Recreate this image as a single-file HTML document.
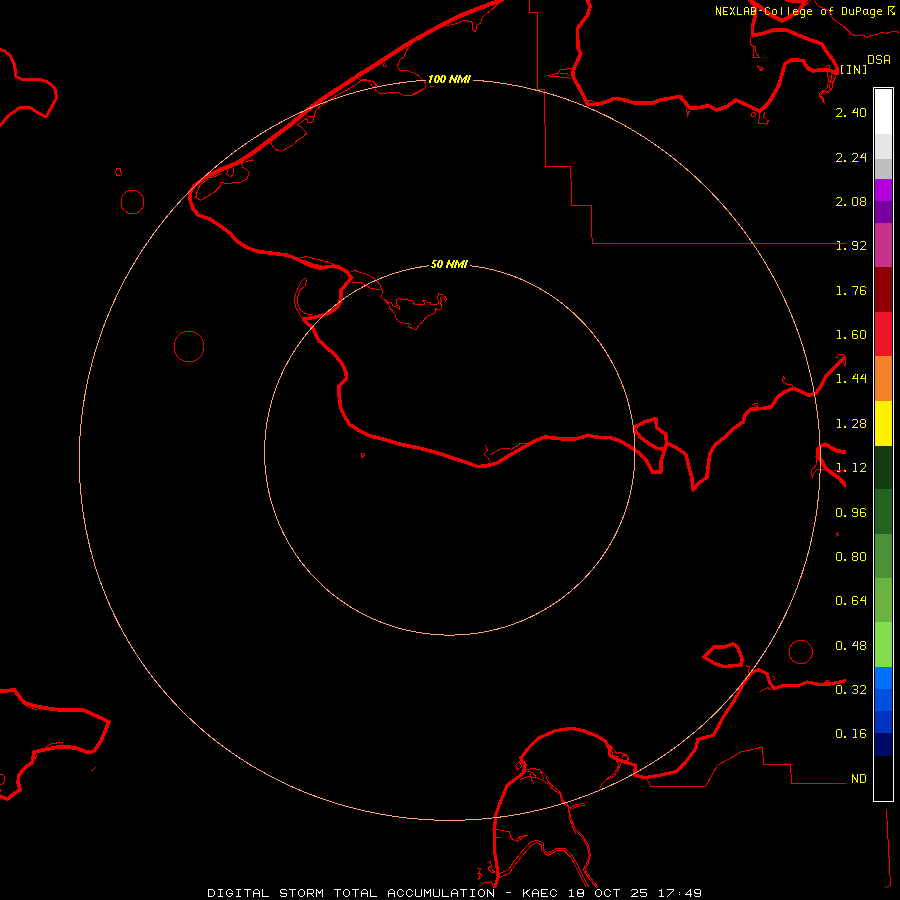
<!DOCTYPE html><html><head><meta charset="utf-8"><title>DSA KAEC</title>
<style>html,body{margin:0;padding:0;background:#000;}body{width:900px;height:900px;overflow:hidden;font-family:"Liberation Sans",sans-serif;}svg{display:block}</style></head><body>
<svg width="900" height="900" viewBox="0 0 900 900" shape-rendering="crispEdges">
<rect width="900" height="900" fill="#000"/>
<clipPath id="mc"><rect x="0" y="0" width="846" height="900"/></clipPath>
<g fill="none" stroke="#f00000" stroke-width="3" stroke-linejoin="round" stroke-linecap="round" clip-path="url(#mc)">
<path stroke-width="3" d="M0.0,49.5 L4.5,51.0 L10.5,56.0 L14.5,64.5 L16.0,76.5 L23.0,80.0 L32.0,79.5 L40.0,79.5 L46.5,81.5 L53.0,86.0 L55.5,90.5 L56.5,98.0 L52.0,106.5 L46.5,116.0 L44.0,116.0 L36.5,112.0 L30.0,107.5 L20.0,107.5 L14.5,111.5 L8.0,116.0 L0.0,126.0"/>
<path stroke-width="3.6" d="M501.7,0.0 L490.0,4.2 L476.7,9.2 L460.0,15.8 L443.3,24.2 L426.7,33.3 L410.0,42.5 L393.3,53.3 L376.7,64.2 L360.0,74.2 L356.7,76.7 L340.0,87.5 L323.3,98.3 L306.7,110.8 L290.0,125.0 L283.3,130.0 L270.0,140.0 L253.3,152.5 L236.7,163.3 L220.0,170.0 L206.7,176.7 L195.0,185.0 L190.0,192.5 L190.0,200.0 L193.3,209.2 L198.3,215.0 L210.0,219.2 L220.0,225.8 L230.0,233.3 L236.7,240.8 L246.7,247.5 L258.3,251.7 L273.3,253.3 L286.7,255.0 L300.0,260.3 L310.7,265.7 L320.0,268.3 L329.3,266.3 L338.7,267.0 L346.7,271.7 L351.3,277.7 L346.7,283.7 L340.7,290.3 L340.7,297.7 L340.0,303.0 L334.7,309.7 L328.0,313.7 L318.7,316.3 L312.0,317.7 L303.3,319.0 L306.0,322.3 L312.0,327.0 L315.3,333.7 L318.3,340.0 L326.7,347.5 L335.0,355.0 L341.7,363.3 L345.8,371.7 L346.7,378.3 L339.2,385.8 L339.2,396.7 L340.8,408.3 L345.0,416.7 L349.2,424.2 L358.3,430.0 L370.0,435.8 L383.3,439.2 L400.0,444.2 L416.7,447.5 L433.3,451.7 L440.0,453.7 L453.3,458.3 L466.7,462.5 L477.5,466.7 L486.7,465.8 L496.7,463.3 L510.0,455.0 L523.3,447.5 L535.0,440.8 L545.0,437.0 L556.7,438.3 L566.7,439.2 L576.7,438.7 L588.3,435.3 L598.3,437.5 L610.0,437.5 L620.0,440.8 L630.0,446.7 L638.3,452.5 L645.8,460.0 L650.0,466.7 L652.5,472.0 L660.8,472.0 L660.8,461.7 L663.3,454.2 L665.0,449.2 L656.7,448.3 L648.3,443.3 L640.8,437.5 L635.8,431.7 L634.2,427.5 L645.0,421.7 L655.8,418.7 L656.7,427.5 L665.8,434.2 L666.7,443.3 L675.0,446.7 L685.8,454.2 L688.3,465.0 L691.7,476.7 L693.3,490.0 L698.3,483.3 L706.7,477.5 L708.3,465.0 L710.0,453.3 L715.0,445.0 L723.3,438.3 L731.7,430.0 L743.3,421.7 L745.0,415.0 L750.8,409.2 L763.3,408.3 L771.7,406.7 L776.7,398.3 L783.3,392.5 L793.3,388.3 L801.7,391.7 L808.3,395.3 L815.8,393.3 L821.7,385.0 L826.7,375.0 L835.0,366.7 L844.2,358.3"/>
<path stroke-width="3.6" d="M665.0,449.2 L666.7,443.3"/>
<path stroke-width="4" d="M848.0,452.6 L838.0,451.1 L830.9,447.6 L825.6,444.4 L821.1,445.8 L817.6,450.2 L818.4,456.4 L822.0,461.8 L825.6,468.0 L831.8,473.3 L838.9,477.8 L848.0,488.5"/>
<path stroke-width="3.7" d="M587.5,0.0 L590.0,6.7 L587.5,15.0 L582.5,21.7 L577.5,28.3 L577.5,38.3 L578.3,48.3 L580.8,53.3 L577.5,60.8 L574.2,67.5 L572.5,74.2 L575.0,80.0 L580.0,89.2 L585.0,99.2 L588.3,104.7 L598.3,104.2 L606.7,101.7 L615.0,98.3 L625.0,100.0 L635.0,103.3 L651.7,103.3 L660.0,100.0 L670.0,98.3 L680.0,96.3 L690.0,108.3 L700.0,107.5 L708.3,105.8 L716.7,110.0 L726.7,106.7 L735.8,100.0 L746.7,105.0 L760.0,111.3 L768.3,103.3 L778.3,86.7 L781.4,76.5 L785.1,63.5 L791.6,59.9 L803.1,60.6 L807.4,67.9 L813.2,70.8 L820.4,70.0 L829.1,70.0 L837.0,73.6 L837.0,67.9 L833.4,60.6 L827.7,53.4 L821.9,44.0 L811.8,40.4 L798.8,35.4 L787.2,30.3 L773.3,30.0 L763.3,33.3 L752.5,35.8 L752.5,26.7 L755.0,16.7 L755.0,6.7 L750.0,0.0"/>
<path stroke-width="4" d="M750.0,0.0 L760.0,6.7 L771.7,15.8 L781.7,20.8 L788.7,17.3 L798.8,11.6 L803.1,4.3 L804.5,0.0"/>
<path stroke-width="4" d="M787.2,0.0 L798.8,1.4 L806.0,0.0"/>
<path stroke-width="3.7" d="M0.0,690.8 L7.2,690.8 L14.4,689.8 L18.8,695.9 L23.8,702.4 L34.7,706.0 L46.2,708.2 L62.1,710.3 L83.8,710.3 L98.2,716.8 L109.0,721.9 L105.4,730.5 L101.1,740.6 L93.9,751.5 L86.6,752.2 L78.0,748.6 L69.3,747.1 L57.8,747.1 L46.2,749.3 L33.9,752.2 L32.5,762.3 L24.5,768.1 L18.8,775.3 L18.1,782.5 L20.2,789.7 L13.7,794.1 L7.2,799.1 L0.0,796.2"/>
<path stroke-width="3.3" d="M493.5,890.0 L495.0,886.7 L498.3,876.7 L496.7,865.0 L494.2,848.3 L494.2,831.7 L495.8,815.0 L497.5,810.0 L501.7,798.3 L507.5,785.0 L516.7,778.3 L523.3,773.3 L525.0,765.0 L520.8,758.3 L528.3,748.3 L538.3,738.3 L555.0,730.8 L571.7,728.3 L583.3,730.8 L596.7,735.8 L605.0,740.8 L609.2,749.2 L610.0,755.8 L616.7,759.2 L626.7,762.6 L635.5,765.3 L634.7,775.1 L644.4,777.7 L660.4,775.1 L676.4,771.5 L685.3,762.6 L696.0,748.4 L697.7,739.5 L713.7,735.1 L722.6,718.2 L733.3,702.2 L737.6,694.2 L745.1,681.0 L750.8,673.5 L758.3,669.7 L766.8,673.5 L769.7,682.9 L774.4,688.6 L782.9,685.7 L798.0,685.7 L807.5,682.0 L818.8,684.4 L832.0,683.8 L848.0,680.0"/>
<path stroke-width="3.5" d="M704.0,656.9 L713.7,647.1 L724.4,646.8 L733.3,643.9 L737.7,647.1 L742.2,659.5 L741.3,664.9 L724.4,666.7 L713.7,663.1 Z"/>
<path stroke-width="4.3" d="M501.7,0.0 L490.0,4.2 L476.7,9.2 L460.0,15.8 L443.3,24.2 L426.7,33.3 L410.0,42.5 L393.3,53.3 L376.7,64.2 L360.0,74.2 L356.7,76.7 L340.0,87.5 L323.3,98.3 L306.7,110.8 L290.0,125.0 L283.3,130.0 L270.0,140.0 L253.3,152.5 L236.7,163.3 L220.0,170.0 L206.7,176.7"/>
</g>
<rect x="873.5" y="87.5" width="20" height="714" fill="#000" stroke="#fff" stroke-width="1"/>
<rect x="875" y="89" width="17" height="45" fill="#ffffff"/>
<rect x="875" y="134" width="17" height="25" fill="#e6e6e6"/>
<rect x="875" y="159" width="17" height="20" fill="#bebebe"/>
<rect x="875" y="179" width="17" height="22" fill="#b000dc"/>
<rect x="875" y="201" width="17" height="22" fill="#7800a0"/>
<rect x="875" y="223" width="17" height="44" fill="#c8328c"/>
<rect x="875" y="267" width="17" height="45" fill="#8c0000"/>
<rect x="875" y="312" width="17" height="44" fill="#f01428"/>
<rect x="875" y="356" width="17" height="45" fill="#f08228"/>
<rect x="875" y="401" width="17" height="45" fill="#fff000"/>
<rect x="875" y="446" width="17" height="43" fill="#143c14"/>
<rect x="875" y="489" width="17" height="45" fill="#236423"/>
<rect x="875" y="534" width="17" height="44" fill="#4b9137"/>
<rect x="875" y="578" width="17" height="44" fill="#69b441"/>
<rect x="875" y="622" width="17" height="45" fill="#82dc50"/>
<rect x="875" y="667" width="17" height="22" fill="#0070ff"/>
<rect x="875" y="689" width="17" height="22" fill="#0050e0"/>
<rect x="875" y="711" width="17" height="22" fill="#0032c0"/>
<rect x="875" y="733" width="17" height="23" fill="#000a64"/>
<path fill="none" stroke="#ffff00" stroke-width="1" stroke-linecap="square" d="M836.50,109.50L837.50,108.50L840.50,108.50L841.50,109.50L841.50,111.24L837.00,115.81L836.50,116.50L841.50,116.50M844.5,115.5h1v1h-1zM857.50,116.50L857.50,108.50M855.50,108.50L852.50,112.50L857.50,112.50M861.50,108.50L864.50,108.50L865.50,109.50L865.50,115.50L864.50,116.50L861.50,116.50L860.50,115.50L860.50,109.50ZM836.50,154.50L837.50,153.50L840.50,153.50L841.50,154.50L841.50,156.24L837.00,160.81L836.50,161.50L841.50,161.50M844.5,160.5h1v1h-1zM852.50,154.50L853.50,153.50L856.50,153.50L857.50,154.50L857.50,156.24L853.00,160.81L852.50,161.50L857.50,161.50M865.50,161.50L865.50,153.50M863.50,153.50L860.50,157.50L865.50,157.50M836.50,198.50L837.50,197.50L840.50,197.50L841.50,198.50L841.50,200.24L837.00,204.81L836.50,205.50L841.50,205.50M844.5,204.5h1v1h-1zM853.50,197.50L856.50,197.50L857.50,198.50L857.50,204.50L856.50,205.50L853.50,205.50L852.50,204.50L852.50,198.50ZM861.50,197.50L864.50,197.50L865.50,198.50L865.50,200.50L864.50,201.50L861.50,201.50L860.50,200.50L860.50,198.50ZM861.50,201.50L860.50,202.50L860.50,204.50L861.50,205.50L864.50,205.50L865.50,204.50L865.50,202.50L864.50,201.50M837.50,241.50L839.50,241.50L839.50,249.50M837.50,249.50L840.50,249.50M844.5,248.5h1v1h-1zM852.50,248.50L853.50,249.50L856.50,249.50L857.50,248.50L857.50,242.50L856.50,241.50L853.50,241.50L852.50,242.50L852.50,244.50L853.50,245.50L857.50,245.50M860.50,242.50L861.50,241.50L864.50,241.50L865.50,242.50L865.50,244.24L861.00,248.81L860.50,249.50L865.50,249.50M837.50,286.50L839.50,286.50L839.50,294.50M837.50,294.50L840.50,294.50M844.5,293.5h1v1h-1zM852.50,286.50L857.50,286.50L857.50,287.64L855.50,291.64L855.50,294.50M865.50,287.50L864.50,286.50L861.50,286.50L860.50,287.50L860.50,293.50L861.50,294.50L864.50,294.50L865.50,293.50L865.50,291.50L864.50,290.50L860.50,290.50M837.50,330.50L839.50,330.50L839.50,338.50M837.50,338.50L840.50,338.50M844.5,337.5h1v1h-1zM857.50,331.50L856.50,330.50L853.50,330.50L852.50,331.50L852.50,337.50L853.50,338.50L856.50,338.50L857.50,337.50L857.50,335.50L856.50,334.50L852.50,334.50M861.50,330.50L864.50,330.50L865.50,331.50L865.50,337.50L864.50,338.50L861.50,338.50L860.50,337.50L860.50,331.50ZM837.50,374.50L839.50,374.50L839.50,382.50M837.50,382.50L840.50,382.50M844.5,381.5h1v1h-1zM857.50,382.50L857.50,374.50M855.50,374.50L852.50,378.50L857.50,378.50M865.50,382.50L865.50,374.50M863.50,374.50L860.50,378.50L865.50,378.50M837.50,419.50L839.50,419.50L839.50,427.50M837.50,427.50L840.50,427.50M844.5,426.5h1v1h-1zM852.50,420.50L853.50,419.50L856.50,419.50L857.50,420.50L857.50,422.24L853.00,426.81L852.50,427.50L857.50,427.50M861.50,419.50L864.50,419.50L865.50,420.50L865.50,422.50L864.50,423.50L861.50,423.50L860.50,422.50L860.50,420.50ZM861.50,423.50L860.50,424.50L860.50,426.50L861.50,427.50L864.50,427.50L865.50,426.50L865.50,424.50L864.50,423.50M837.50,463.50L839.50,463.50L839.50,471.50M837.50,471.50L840.50,471.50M844.5,470.5h1v1h-1zM853.50,463.50L855.50,463.50L855.50,471.50M853.50,471.50L856.50,471.50M860.50,464.50L861.50,463.50L864.50,463.50L865.50,464.50L865.50,466.24L861.00,470.81L860.50,471.50L865.50,471.50M837.50,508.50L840.50,508.50L841.50,509.50L841.50,515.50L840.50,516.50L837.50,516.50L836.50,515.50L836.50,509.50ZM844.5,515.5h1v1h-1zM852.50,515.50L853.50,516.50L856.50,516.50L857.50,515.50L857.50,509.50L856.50,508.50L853.50,508.50L852.50,509.50L852.50,511.50L853.50,512.50L857.50,512.50M865.50,509.50L864.50,508.50L861.50,508.50L860.50,509.50L860.50,515.50L861.50,516.50L864.50,516.50L865.50,515.50L865.50,513.50L864.50,512.50L860.50,512.50M837.50,552.50L840.50,552.50L841.50,553.50L841.50,559.50L840.50,560.50L837.50,560.50L836.50,559.50L836.50,553.50ZM844.5,559.5h1v1h-1zM853.50,552.50L856.50,552.50L857.50,553.50L857.50,555.50L856.50,556.50L853.50,556.50L852.50,555.50L852.50,553.50ZM853.50,556.50L852.50,557.50L852.50,559.50L853.50,560.50L856.50,560.50L857.50,559.50L857.50,557.50L856.50,556.50M861.50,552.50L864.50,552.50L865.50,553.50L865.50,559.50L864.50,560.50L861.50,560.50L860.50,559.50L860.50,553.50ZM837.50,596.50L840.50,596.50L841.50,597.50L841.50,603.50L840.50,604.50L837.50,604.50L836.50,603.50L836.50,597.50ZM844.5,603.5h1v1h-1zM857.50,597.50L856.50,596.50L853.50,596.50L852.50,597.50L852.50,603.50L853.50,604.50L856.50,604.50L857.50,603.50L857.50,601.50L856.50,600.50L852.50,600.50M865.50,604.50L865.50,596.50M863.50,596.50L860.50,600.50L865.50,600.50M837.50,641.50L840.50,641.50L841.50,642.50L841.50,648.50L840.50,649.50L837.50,649.50L836.50,648.50L836.50,642.50ZM844.5,648.5h1v1h-1zM857.50,649.50L857.50,641.50M855.50,641.50L852.50,645.50L857.50,645.50M861.50,641.50L864.50,641.50L865.50,642.50L865.50,644.50L864.50,645.50L861.50,645.50L860.50,644.50L860.50,642.50ZM861.50,645.50L860.50,646.50L860.50,648.50L861.50,649.50L864.50,649.50L865.50,648.50L865.50,646.50L864.50,645.50M837.50,685.50L840.50,685.50L841.50,686.50L841.50,692.50L840.50,693.50L837.50,693.50L836.50,692.50L836.50,686.50ZM844.5,692.5h1v1h-1zM852.50,686.50L853.50,685.50L856.50,685.50L857.50,686.50L857.50,688.50L856.50,689.50L854.17,689.50M856.50,689.50L857.50,690.50L857.50,692.50L856.50,693.50L853.50,693.50L852.50,692.50M860.50,686.50L861.50,685.50L864.50,685.50L865.50,686.50L865.50,688.24L861.00,692.81L860.50,693.50L865.50,693.50M837.50,729.50L840.50,729.50L841.50,730.50L841.50,736.50L840.50,737.50L837.50,737.50L836.50,736.50L836.50,730.50ZM844.5,736.5h1v1h-1zM853.50,729.50L855.50,729.50L855.50,737.50M853.50,737.50L856.50,737.50M865.50,730.50L864.50,729.50L861.50,729.50L860.50,730.50L860.50,736.50L861.50,737.50L864.50,737.50L865.50,736.50L865.50,734.50L864.50,733.50L860.50,733.50M852.50,782.50L852.50,774.50L857.50,782.50L857.50,774.50M860.50,774.50L860.50,782.50M860.50,774.50L864.50,774.50L865.50,775.50L865.50,781.50L864.50,782.50L860.50,782.50M868.50,55.50L868.50,63.50M868.50,55.50L872.50,55.50L873.50,56.50L873.50,62.50L872.50,63.50L868.50,63.50M881.50,56.50L880.50,55.50L877.50,55.50L876.50,56.50L876.50,58.50L877.50,59.50L880.50,59.50L881.50,60.50L881.50,62.50L880.50,63.50L877.50,63.50L876.50,62.50M884.50,63.50L884.50,56.50L885.50,55.50L888.50,55.50L889.50,56.50L889.50,63.50M884.50,60.07L889.50,60.07M842.67,65.50L841.00,65.50L841.00,73.50L842.67,73.50M847.33,65.50L850.67,65.50M849.00,65.50L849.00,73.50M847.33,73.50L850.67,73.50M854.50,73.50L854.50,65.50L859.50,73.50L859.50,65.50M863.33,65.50L865.00,65.50L865.00,73.50L863.33,73.50M716.50,14.50L716.50,7.50L720.50,14.50L720.50,7.50M727.50,7.50L723.50,7.50L723.50,14.50L727.50,14.50M723.50,11.00L726.17,11.00M730.50,7.50L734.50,14.50M734.50,7.50L730.50,14.50M737.50,7.50L737.50,14.50L741.50,14.50M744.50,14.50L744.50,8.50L745.50,7.50L747.50,7.50L748.50,8.50L748.50,14.50M744.50,11.50L748.50,11.50M751.50,7.50L751.50,14.50M751.50,7.50L754.50,7.50L755.50,8.50L755.50,10.00L754.50,11.00L751.50,11.00M754.50,11.00L755.50,12.00L755.50,13.50L754.50,14.50L751.50,14.50M759.17,10.50L761.83,10.50M769.50,8.50L768.50,7.50L766.50,7.50L765.50,8.50L765.50,13.50L766.50,14.50L768.50,14.50L769.50,13.50M773.50,9.50L775.50,9.50L776.50,10.50L776.50,13.50L775.50,14.50L773.50,14.50L772.50,13.50L772.50,10.50ZM781.50,7.50L781.50,14.50M788.50,7.50L788.50,14.50M793.50,11.50L797.50,11.50L797.50,10.50L796.50,9.50L794.50,9.50L793.50,10.50L793.50,13.50L794.50,14.50L797.50,14.50M804.50,9.50L804.50,16.50L803.50,17.50L801.50,17.50M804.50,10.50L803.50,9.50L801.50,9.50L800.50,10.50L800.50,13.50L801.50,14.50L803.50,14.50L804.50,13.50M807.50,11.50L811.50,11.50L811.50,10.50L810.50,9.50L808.50,9.50L807.50,10.50L807.50,13.50L808.50,14.50L811.50,14.50M822.50,9.50L824.50,9.50L825.50,10.50L825.50,13.50L824.50,14.50L822.50,14.50L821.50,13.50L821.50,10.50ZM832.50,7.50L831.50,7.50L830.50,8.50L830.50,14.50M829.50,10.50L832.50,10.50M842.50,7.50L842.50,14.50M842.50,7.50L845.50,7.50L846.50,8.50L846.50,13.50L845.50,14.50L842.50,14.50M849.50,9.50L849.50,13.50L850.50,14.50L852.50,14.50L853.50,13.50M853.50,9.50L853.50,14.50M856.50,14.50L856.50,7.50L859.50,7.50L860.50,8.50L860.50,10.50L859.50,11.50L856.50,11.50M867.50,10.50L866.50,9.50L864.50,9.50L863.50,10.50L863.50,13.50L864.50,14.50L865.50,14.50L867.50,12.50M867.50,9.50L867.50,13.50L868.17,14.50M874.50,9.50L874.50,16.50L873.50,17.50L871.50,17.50M874.50,10.50L873.50,9.50L871.50,9.50L870.50,10.50L870.50,13.50L871.50,14.50L873.50,14.50L874.50,13.50M877.50,11.50L881.50,11.50L881.50,10.50L880.50,9.50L878.50,9.50L877.50,10.50L877.50,13.50L878.50,14.50L881.50,14.50"/>
<path fill="none" stroke="#ffff00" stroke-width="1" stroke-linecap="square" d="M888.5,14.5 L888.5,6.5 L894.5,6.5 L890.5,10.5 L894.5,14.5"/>
<path fill="#ffff00" d="M894,12h1v1h-1zM893,13h2v1h-2zM892,14h3v1h-3z"/>
<g fill="none" stroke="#f00000" stroke-width="1" stroke-linejoin="round">
<path d="M529.5,0 V12.5 H537.5 V89.5 H544.5 V125 H545.5 V166.5 H570.5 V179 H571.5 V205.5 H591.5 V238 H592.5 V243.5 H846"/>
<path d="M647.1,779.5 L650.6,786.5 L705.7,786.5 L717.3,765.3 L730.0,758.5 L741.3,751.9 L762.5,747.1 L763.5,764.5 L790.5,764.5 L791.5,783.5 L846.0,783.5"/>
<path d="M886.5,810.2 L890.5,885.4 L885.5,887.5"/>
<path d="M814.7,0.0 L817.5,5.8 L824.8,8.7 L830.5,13.0 L832.7,18.8 L837.8,22.4 L845.0,27.4 L852.2,34.7 L858.0,36.1 L862.3,34.7 L866.6,37.3 L872.4,35.4 L878.2,33.9 L881.1,32.5 L886.9,33.2 L894.1,31.0 L899.1,32.5"/>
<path d="M804.5,5.8 L811.0,0.0"/>
<path d="M144,202 A11.5,11.8 0 1,0 121,202 A11.5,11.8 0 1,0 144,202"/>
<path d="M204,346.5 A15,15.5 0 1,0 174,346.5 A15,15.5 0 1,0 204,346.5"/>
<path d="M812.5,652 A11.7,11.6 0 1,0 789,652 A11.7,11.6 0 1,0 812.5,652"/>
<path d="M117.0,168.5 L120.5,168.5 L120.5,172.0 L122.0,174.0 L120.0,176.0 L117.0,175.5 L115.5,172.0 Z"/>
<path d="M5,779 A5,5 0 0,0 0,774 M0,784.5 A5,5 0 0,0 5,779"/>
<path d="M361.5,453.0 L364.0,453.0 L364.0,455.5 L362.0,457.5 L361.5,453.0"/>
<path d="M91.7,771.0 L96.5,766.6"/>
<path d="M498.3,3.3 L493.3,8.3 L486.7,13.3 L481.7,18.3 L480.8,23.3 L476.7,25.0 L477.0,29.0 L475.0,31.7 L472.5,29.0 L473.0,25.0 L471.7,21.7 L463.3,20.3 L455.0,24.2 L445.0,25.8 L441.7,26.7"/>
<path d="M413.0,42.5 L406.7,50.0 L404.2,56.7 L400.0,60.0 L397.5,65.8 L400.0,70.8 L408.3,70.8 L416.7,74.2 L423.3,80.0 L426.7,85.0 L425.0,88.3 L418.3,92.5 L411.7,95.8 L403.3,95.3 L398.3,92.5 L380.0,93.3 L373.3,88.3 L376.7,85.0 L373.3,81.7 L363.3,79.2 L356.7,84.2 L346.7,90.0 L338.3,94.2 L333.3,97.5 L323.3,104.2 L315.8,110.0 L314.2,115.8 L313.3,121.7 L308.0,123.0 L306.7,118.3 L301.7,121.7 L296.7,125.0 L301.7,127.5 L306.7,132.5 L303.3,136.7 L296.7,140.8 L293.3,145.0 L286.7,148.3 L281.7,151.3 L275.0,149.2 L270.8,143.3 L270.0,140.0"/>
<path d="M373.3,87.5 L368.3,80.8 L360.0,80.0 L356.7,76.7"/>
<path d="M425.0,88.3 L419.0,91.0 L412.0,94.5 L418.3,92.5"/>
<path d="M430.0,86.5 L434.0,86.5"/>
<path d="M386.2,65.3 A1.5,1.5 0 1,0 383.2,65.3 A1.5,1.5 0 1,0 386.2,65.3"/>
<path d="M306.7,118.3 L309.0,116.0 L313.0,116.0 L314.0,120.0"/>
<path d="M208.3,179.2 L200.0,185.0 L196.7,193.3 L195.8,197.5 L200.8,200.3 L208.3,195.8 L215.0,191.7 L220.0,186.7 L220.0,182.5 L226.7,183.3 L240.0,182.5 L246.7,179.2 L249.2,173.3 L246.7,169.2 L242.5,167.5 L241.7,163.3 L248.3,160.8 L253.3,160.8 L251.7,158.3"/>
<path d="M228.3,169.2 L226.7,174.2 L230.8,177.5 L233.3,173.3 L233.3,168.3"/>
<path d="M210.0,178.0 L216.0,176.0 L222.0,173.5"/>
<path d="M300.0,257.5 L306.7,256.7 L316.7,259.2 L326.7,261.7 L335.0,265.0"/>
<path d="M303.0,260.0 L313.0,264.0 L322.0,266.0"/>
<path d="M305.3,277.7 L301.3,281.7 L298.0,288.3 L295.3,295.0 L294.4,301.7 L296.0,307.7 L298.7,312.3 L301.3,317.7"/>
<path d="M305.3,277.7 L306.7,279.7 L305.3,285.7 L300.0,290.3 L297.3,297.7 L298.0,304.3 L300.0,309.7 L305.3,313.7 L312.7,315.0"/>
<path d="M351.3,271.7 L354.7,270.3 L360.0,272.3 L366.7,274.3 L373.3,277.7 L376.0,280.0 L380.0,285.0 L381.5,289.0 L383.0,292.5 L380.5,297.0 L383.0,299.0 L386.0,300.0 L388.0,303.0 L391.5,302.5 L393.0,306.0 L397.0,307.5 L399.5,309.0 L400.0,308.0 L398.5,305.5 L396.5,305.0 L396.5,300.0 L398.0,298.5 L401.0,298.5 L402.0,299.5 L406.0,299.5 L406.5,298.5 L408.0,300.0 L412.5,300.0 L413.5,303.0 L415.0,305.0 L417.0,304.5 L424.0,304.5 L425.0,302.5 L422.5,301.0 L425.5,300.5 L427.0,302.0 L431.0,302.5 L430.0,304.5 L432.0,305.0 L436.0,304.5 L439.0,303.0 L437.5,298.0 L438.5,293.5 L440.0,294.0 L442.0,294.5 L445.0,296.5 L446.5,299.0 L445.5,301.5 L444.0,298.0 L441.5,296.5 L440.0,298.0 L441.5,300.0 L440.5,303.0 L441.5,306.0 L441.0,309.0 L438.5,310.5 L436.0,308.5 L435.0,313.0 L432.0,314.5 L428.0,316.0 L424.5,319.0 L423.0,322.0 L419.0,325.0 L417.0,328.0 L416.5,330.0 L414.0,329.0 L409.0,327.0 L408.0,325.5 L410.0,324.5 L409.0,323.5 L403.0,323.0 L398.5,321.5 L396.0,318.0 L395.0,314.0 L391.5,310.0 L389.5,308.0 L389.0,304.5 L386.0,302.0 L383.0,299.0"/>
<path d="M352.0,283.0 L360.0,282.3 L365.3,285.0 L370.7,288.3 L378.7,289.7 L381.5,289.0"/>
<path d="M485.0,445.0 L487.5,450.0 L484.2,454.2 L487.5,457.5 L490.0,461.7"/>
<path d="M490.0,455.0 L500.0,449.2 L506.7,448.3 L511.7,449.2 L520.0,443.7 L526.7,443.7"/>
<path d="M783.3,375.8 L782.5,381.7 L786.7,384.2 L791.7,384.2 L793.3,388.0"/>
<path d="M783.3,375.8 L785.0,379.0 L783.0,381.0"/>
<path d="M752.5,404.2 L757.5,403.3 L757.5,406.7 L752.5,404.2"/>
<path d="M836.7,358.3 L838.0,355.0 L842.0,354.0 L845.0,356.0 L845.0,365.8 L843.0,362.0"/>
<path d="M815.8,455.6 L816.7,460.0 L816.7,464.4 L814.0,468.0 L811.3,469.3 L811.8,473.3 L812.2,477.8 L813.6,473.3 L817.6,469.3 L823.8,469.3"/>
<path d="M834.4,470.7 L845.0,471.1"/>
<path d="M838.0,474.0 L841.0,471.0"/>
<path d="M572.5,68.3 L560.0,70.0 L558.3,73.3 L547.5,75.8 L555.0,76.7 L568.3,77.5 L571.0,79.0"/>
<path d="M560.0,73.0 L566.0,73.0 L569.0,76.0"/>
<path d="M585.8,29.5 L585.8,30.5"/>
<path d="M585.0,32.5 L585.0,33.5"/>
<path d="M588.3,100.0 L592.0,101.0 L595.0,102.5"/>
<path d="M750.8,37.5 L750.0,43.3 L753.3,46.7 L753.3,57.5 L759.2,57.5 L755.8,51.7 L755.8,46.7 L753.3,46.7"/>
<path d="M757.5,65.8 L763.3,68.3 L760.8,70.8 Z"/>
<path d="M760.0,113.3 L758.3,123.3 L766.7,124.2 L768.3,120.8 L763.3,116.7 L765.0,111.7"/>
<path d="M686.7,108.3 L687.5,116.7 L689.2,110.8"/>
<path d="M755.3,114.7 A2,2 0 1,0 751.3,114.7 A2,2 0 1,0 755.3,114.7"/>
<path d="M704.5,106.0 L706.7,103.5 L709.0,106.0"/>
<path d="M827.7,72.0 L827.3,75.3 L828.7,78.0 L828.7,81.3 L827.7,83.3 L827.3,88.0 L825.3,90.0 L822.7,90.0 L820.0,93.3 L819.3,96.0 L821.3,98.0 L822.7,99.3 L822.0,101.3 L824.7,103.3"/>
<path d="M836.0,74.0 L836.0,75.3 L835.3,78.0 L833.3,80.7 L832.3,83.3 L832.3,87.3 L831.3,89.3 L828.7,92.7 L824.0,93.3 L820.5,95.5 L822.5,97.5 L824.0,98.5 L823.5,101.0 L825.0,102.0"/>
<path d="M831.3,74.0 L831.3,76.7 L831.0,80.0 L830.3,83.3 L829.3,86.7 L830.3,88.7 L828.0,91.0 L823.0,91.5 L821.0,94.0"/>
<path d="M829.3,76.7 L833.3,76.7"/>
<path d="M828.7,81.3 L832.3,81.3"/>
<path d="M833.5,77.0 L834.5,80.0 L833.0,83.0"/>
<path d="M824.8,66.4 L829.1,65.7 L830.0,69.0"/>
<path d="M768.3,103.3 L771.0,100.0 L773.0,96.0"/>
<path d="M23.8,703.8 L28.9,707.4 L37.5,710.0 L38.3,708.2"/>
<path d="M44.8,747.1 L52.0,743.5 L62.1,742.4 L62.8,745.7"/>
<path d="M35.4,753.6 L36.8,756.5 L34.7,759.4"/>
<path d="M525.0,770.0 L533.3,768.3 L540.0,770.0 L545.8,775.8 L548.3,781.7 L553.3,786.7 L558.3,790.0 L561.7,795.0 L562.5,800.0 L566.7,803.3 L570.0,808.3"/>
<path d="M520.0,779.2 L528.3,776.7 L536.7,777.5 L543.3,780.8 L547.5,783.3 L551.7,788.3 L556.7,791.7 L560.0,794.2 L561.0,799.0 L564.0,803.0"/>
<path d="M515.8,765.0 L520.0,761.7 L521.7,766.7 L517.5,770.0 Z"/>
<path d="M530.0,773.3 L531.7,780.0 L534.2,784.2"/>
<path d="M540.0,770.0 L542.0,775.0 L544.2,779.2"/>
<path d="M525.0,772.0 L529.0,771.0 L533.0,773.0 L536.0,777.0"/>
<path d="M621.7,761.7 L618.3,770.0 L613.3,776.7 L606.7,779.2 L601.7,784.2 L600.0,788.3"/>
<path d="M619.0,764.0 L616.0,771.0 L611.0,776.0 L605.0,781.0"/>
<path d="M610.0,745.0 L616.7,753.3 L621.7,752.5 L627.5,757.5 L626.7,761.0"/>
<path d="M570.0,808.3 L575.0,805.0 L583.3,803.3 L585.0,805.0 L577.0,806.5 L571.0,809.5"/>
<path d="M560.8,801.7 L568.3,806.7 L570.0,820.0 L573.3,828.3 L581.7,836.7 L586.7,845.0 L589.2,855.0 L586.7,863.3 L583.3,870.0 L590.0,880.0 L596.7,887.5"/>
<path d="M566.7,803.3 L569.0,810.0 L571.5,820.0 L575.0,828.0 L583.0,836.0 L588.3,845.0 L590.5,855.0 L588.0,864.0 L585.0,870.0 L591.5,879.0 L598.0,887.0"/>
<path d="M573.3,828.3 L575.5,833.0 L574.0,829.0"/>
<path d="M491.7,829.2 L500.0,830.0 L509.2,831.7 L511.7,838.3 L515.0,840.8 L520.0,836.7 L528.3,835.0 L522.0,838.0 L516.0,842.0"/>
<path d="M496.0,838.0 L501.0,837.5"/>
<path d="M500.0,873.3 L508.3,870.0 L515.0,860.0 L523.3,850.0 L530.0,842.5 L536.7,840.0 L543.3,843.3 L543.3,850.0 L548.3,853.3 L556.7,848.3 L565.0,848.3 L571.7,855.0 L576.7,863.3 L581.7,873.3 L586.7,883.3 L589.0,887.0"/>
<path d="M500.0,877.5 L509.0,873.5 L516.0,863.5 L524.5,853.0 L531.0,845.5 L536.7,842.5 L541.5,845.0 L542.0,851.0 L547.5,855.5 L553.0,853.0 L557.0,850.5 L564.0,850.5 L570.0,856.5 L575.0,865.0 L580.0,875.0 L585.0,885.0 L586.0,887.0"/>
<path d="M486.7,863.0 L490.0,861.5 L492.0,866.0 L488.0,868.0 L491.0,872.0 L495.0,873.0 L492.0,869.0 L489.0,866.0"/>
<path d="M477.5,869.0 L481.0,868.0 L479.0,872.0 L482.0,876.0 L478.0,880.0 L480.0,876.0 L477.5,873.0"/>
<path d="M479.0,886.0 L484.0,883.0 L491.7,881.7 L493.0,886.0"/>
<path d="M745.7,665.8 L749.3,666.7 L748.4,672.9"/>
<path d="M760.2,691.4 L767.8,687.6 L771.0,690.0"/>
<path d="M772.0,676.0 L775.0,677.5 L773.5,680.0"/>
<path d="M825.5,682.0 L827.3,680.0 L829.5,682.0"/>
<path d="M606.2,741.3 L611.0,748.0 L613.0,755.0 L619.0,757.0"/>
<path d="M622.0,758.0 L624.0,753.0 L629.0,757.0 L627.0,762.0"/>
<path d="M616.0,759.1 L619.0,766.0 L615.0,772.0"/>
<path d="M838.0,532.5 L836.5,534.0 L838.0,535.5 L836.5,536.5"/>
<path d="M0.5,789 V792"/>
</g>
<g fill="none" stroke="#ffa07a" stroke-width="1">
<path d="M449.78,79.38 L452.93,79.39 L456.07,79.44 L459.22,79.51 L462.36,79.61 L465.50,79.73 L468.64,79.89 L471.79,80.07 L474.92,80.28 L478.06,80.52 L481.20,80.79 L484.33,81.09 L487.46,81.41 L490.59,81.76 L493.72,82.14 L496.84,82.55 L499.96,82.99 L503.07,83.45 L506.18,83.94 L509.29,84.46 L512.40,85.01 L515.50,85.58 L518.59,86.19 L521.68,86.82 L524.77,87.48 L527.85,88.16 L530.92,88.88 L533.99,89.62 L537.05,90.38 L540.11,91.18 L543.16,92.00 L546.20,92.85 L549.24,93.73 L552.27,94.64 L555.29,95.57 L558.31,96.53 L561.31,97.51 L564.31,98.52 L567.31,99.56 L570.29,100.63 L573.26,101.72 L576.23,102.84 L579.19,103.99 L582.14,105.16 L585.08,106.36 L588.01,107.58 L590.93,108.83 L593.84,110.11 L596.73,111.41 L599.62,112.74 L602.50,114.09 L605.37,115.47 L608.23,116.87 L611.07,118.30 L613.91,119.76 L616.73,121.24 L619.54,122.74 L622.34,124.27 L625.13,125.83 L627.90,127.41 L630.67,129.01 L633.42,130.64 L636.15,132.30 L638.88,133.97 L641.59,135.67 L644.28,137.40 L646.96,139.15 L649.63,140.92 L652.29,142.72 L654.93,144.54 L657.55,146.38 L660.16,148.24 L662.76,150.13 L665.34,152.05 L667.90,153.98 L670.45,155.94 L672.99,157.92 L675.50,159.92 L678.01,161.94 L680.49,163.99 L682.96,166.05 L685.41,168.14 L687.85,170.25 L690.27,172.38 L692.67,174.54 L695.05,176.71 L697.42,178.91 L699.77,181.12 L702.10,183.36 L704.41,185.61 L706.71,187.89 L708.98,190.18 L711.24,192.50 L713.48,194.84 L715.70,197.19 L717.90,199.56 L720.08,201.96 L722.24,204.37 L724.39,206.80 L726.51,209.25 L728.61,211.72 L730.69,214.20 L732.76,216.71 L734.80,219.23 L736.82,221.77 L738.82,224.32 L740.80,226.90 L742.76,229.49 L744.70,232.09 L746.61,234.72 L748.51,237.36 L750.38,240.01 L752.23,242.69 L754.06,245.37 L755.86,248.08 L757.65,250.80 L759.41,253.53 L761.15,256.28 L762.87,259.04 L764.56,261.82 L766.23,264.62 L767.88,267.42 L769.50,270.24 L771.11,273.08 L772.68,275.92 L774.24,278.79 L775.77,281.66 L777.27,284.55 L778.76,287.45 L780.21,290.36 L781.65,293.28 L783.06,296.22 L784.44,299.17 L785.80,302.13 L787.14,305.10 L788.45,308.08 L789.73,311.07 L790.99,314.07 L792.23,317.09 L793.44,320.11 L794.62,323.14 L795.78,326.18 L796.92,329.24 L798.02,332.30 L799.11,335.37 L800.16,338.45 L801.19,341.54 L802.20,344.63 L803.17,347.73 L804.12,350.85 L805.05,353.97 L805.95,357.09 L806.82,360.23 L807.66,363.37 L808.48,366.51 L809.27,369.67 L810.04,372.82 L810.78,375.99 L811.49,379.16 L812.17,382.34 L812.83,385.52 L813.45,388.70 L814.06,391.90 L814.63,395.09 L815.18,398.29 L815.70,401.49 L816.19,404.70 L816.65,407.91 L817.09,411.13 L817.50,414.34 L817.88,417.56 L818.23,420.78 L818.56,424.01 L818.85,427.23 L819.12,430.46 L819.36,433.69 L819.58,436.92 L819.76,440.15 L819.92,443.38 L820.05,446.62 L820.15,449.85 L820.22,453.08 L820.27,456.32 L820.28,459.55 L820.27,462.78 L820.23,466.01 L820.16,469.24 L820.06,472.47 L819.94,475.69 L819.78,478.92 L819.60,482.14 L819.39,485.36 L819.15,488.57 L818.89,491.79 L818.59,495.00 L818.27,498.21 L817.91,501.41 L817.53,504.61 L817.12,507.80 L816.69,511.00 L816.22,514.18 L815.73,517.36 L815.20,520.54 L814.65,523.71 L814.08,526.88 L813.47,530.03 L812.83,533.19 L812.17,536.33 L811.48,539.47 L810.76,542.61 L810.01,545.73 L809.24,548.85 L808.43,551.97 L807.60,555.07 L806.74,558.16 L805.85,561.25 L804.94,564.33 L804.00,567.40 L803.03,570.46 L802.03,573.52 L801.00,576.56 L799.95,579.59 L798.87,582.61 L797.76,585.63 L796.63,588.63 L795.47,591.62 L794.28,594.60 L793.06,597.57 L791.82,600.53 L790.55,603.48 L789.25,606.42 L787.93,609.34 L786.58,612.25 L785.20,615.15 L783.80,618.04 L782.37,620.91 L780.91,623.78 L779.43,626.62 L777.92,629.46 L776.39,632.28 L774.83,635.08 L773.24,637.88 L771.63,640.66 L769.99,643.42 L768.33,646.17 L766.64,648.90 L764.93,651.62 L763.19,654.33 L761.43,657.01 L759.64,659.69 L757.83,662.34 L756.00,664.98 L754.14,667.61 L752.25,670.21 L750.34,672.80 L748.41,675.38 L746.45,677.93 L744.47,680.47 L742.47,682.99 L740.44,685.50 L738.39,687.98 L736.31,690.45 L734.22,692.90 L732.10,695.33 L729.95,697.74 L727.79,700.14 L725.60,702.51 L723.39,704.86 L721.16,707.20 L718.91,709.52 L716.63,711.81 L714.34,714.09 L712.02,716.34 L709.68,718.58 L707.32,720.79 L704.94,722.99 L702.54,725.16 L700.12,727.32 L697.68,729.45 L695.22,731.56 L692.74,733.65 L690.24,735.71 L687.72,737.76 L685.18,739.78 L682.62,741.78 L680.04,743.76 L677.44,745.72 L674.83,747.65 L672.20,749.57 L669.55,751.46 L666.88,753.32 L664.19,755.16 L661.49,756.98 L658.77,758.78 L656.03,760.55 L653.28,762.30 L650.51,764.03 L647.72,765.73 L644.92,767.40 L642.10,769.06 L639.26,770.69 L636.41,772.29 L633.55,773.87 L630.67,775.43 L627.77,776.96 L624.86,778.46 L621.94,779.94 L619.00,781.40 L616.05,782.83 L613.09,784.23 L610.11,785.61 L607.12,786.96 L604.11,788.29 L601.09,789.59 L598.07,790.87 L595.02,792.12 L591.97,793.34 L588.91,794.54 L585.83,795.71 L582.74,796.86 L579.64,797.98 L576.54,799.07 L573.42,800.14 L570.29,801.18 L567.15,802.19 L564.00,803.17 L560.84,804.13 L557.67,805.06 L554.50,805.97 L551.31,806.85 L548.12,807.70 L544.92,808.52 L541.71,809.32 L538.49,810.08 L535.27,810.82 L532.04,811.54 L528.80,812.22 L525.56,812.88 L522.31,813.51 L519.05,814.12 L515.79,814.69 L512.52,815.24 L509.25,815.76 L505.98,816.25 L502.69,816.71 L499.41,817.15 L496.12,817.56 L492.82,817.94 L489.53,818.29 L486.23,818.61 L482.92,818.91 L479.62,819.18 L476.31,819.42 L473.00,819.63 L469.68,819.81 L466.37,819.97 L463.05,820.09 L459.73,820.19 L456.42,820.26 L453.10,820.31 L449.78,820.32 L446.46,820.31 L443.14,820.26 L439.83,820.19 L436.51,820.09 L433.19,819.97 L429.88,819.81 L426.56,819.63 L423.25,819.42 L419.94,819.18 L416.64,818.91 L413.33,818.61 L410.03,818.29 L406.74,817.94 L403.44,817.56 L400.15,817.15 L396.87,816.71 L393.58,816.25 L390.31,815.76 L387.04,815.24 L383.77,814.69 L380.51,814.12 L377.25,813.51 L374.00,812.88 L370.76,812.22 L367.52,811.54 L364.29,810.82 L361.07,810.08 L357.85,809.32 L354.64,808.52 L351.44,807.70 L348.25,806.85 L345.06,805.97 L341.89,805.06 L338.72,804.13 L335.56,803.17 L332.41,802.19 L329.27,801.18 L326.14,800.14 L323.02,799.07 L319.92,797.98 L316.82,796.86 L313.73,795.71 L310.65,794.54 L307.59,793.34 L304.54,792.12 L301.49,790.87 L298.47,789.59 L295.45,788.29 L292.44,786.96 L289.45,785.61 L286.47,784.23 L283.51,782.83 L280.56,781.40 L277.62,779.94 L274.70,778.46 L271.79,776.96 L268.89,775.43 L266.01,773.87 L263.15,772.29 L260.30,770.69 L257.46,769.06 L254.64,767.40 L251.84,765.73 L249.05,764.03 L246.28,762.30 L243.53,760.55 L240.79,758.78 L238.07,756.98 L235.37,755.16 L232.68,753.32 L230.01,751.46 L227.36,749.57 L224.73,747.65 L222.12,745.72 L219.52,743.76 L216.94,741.78 L214.38,739.78 L211.84,737.76 L209.32,735.71 L206.82,733.65 L204.34,731.56 L201.88,729.45 L199.44,727.32 L197.02,725.16 L194.62,722.99 L192.24,720.79 L189.88,718.58 L187.54,716.34 L185.22,714.09 L182.93,711.81 L180.65,709.52 L178.40,707.20 L176.17,704.86 L173.96,702.51 L171.77,700.14 L169.61,697.74 L167.46,695.33 L165.34,692.90 L163.25,690.45 L161.17,687.98 L159.12,685.50 L157.09,682.99 L155.09,680.47 L153.11,677.93 L151.15,675.38 L149.22,672.80 L147.31,670.21 L145.42,667.61 L143.56,664.98 L141.73,662.34 L139.92,659.69 L138.13,657.01 L136.37,654.33 L134.63,651.62 L132.92,648.90 L131.23,646.17 L129.57,643.42 L127.93,640.66 L126.32,637.88 L124.73,635.09 L123.17,632.28 L121.64,629.46 L120.13,626.62 L118.65,623.78 L117.19,620.91 L115.76,618.04 L114.36,615.15 L112.98,612.25 L111.63,609.34 L110.31,606.42 L109.01,603.48 L107.74,600.53 L106.50,597.57 L105.28,594.60 L104.09,591.62 L102.93,588.63 L101.80,585.63 L100.69,582.61 L99.61,579.59 L98.56,576.56 L97.53,573.52 L96.53,570.46 L95.56,567.40 L94.62,564.33 L93.71,561.25 L92.82,558.16 L91.96,555.07 L91.13,551.97 L90.32,548.85 L89.55,545.73 L88.80,542.61 L88.08,539.47 L87.39,536.33 L86.73,533.19 L86.09,530.03 L85.48,526.88 L84.91,523.71 L84.36,520.54 L83.83,517.36 L83.34,514.18 L82.87,511.00 L82.44,507.80 L82.03,504.61 L81.65,501.41 L81.29,498.21 L80.97,495.00 L80.67,491.79 L80.41,488.57 L80.17,485.36 L79.96,482.14 L79.78,478.92 L79.62,475.69 L79.50,472.47 L79.40,469.24 L79.33,466.01 L79.29,462.78 L79.28,459.55 L79.29,456.32 L79.34,453.08 L79.41,449.85 L79.51,446.62 L79.64,443.38 L79.80,440.15 L79.98,436.92 L80.20,433.69 L80.44,430.46 L80.71,427.23 L81.00,424.01 L81.33,420.78 L81.68,417.56 L82.06,414.34 L82.47,411.13 L82.91,407.91 L83.37,404.70 L83.86,401.49 L84.38,398.29 L84.93,395.09 L85.50,391.90 L86.11,388.70 L86.73,385.52 L87.39,382.34 L88.07,379.16 L88.78,375.99 L89.52,372.82 L90.29,369.67 L91.08,366.51 L91.90,363.37 L92.74,360.23 L93.61,357.09 L94.51,353.97 L95.44,350.85 L96.39,347.73 L97.36,344.63 L98.37,341.54 L99.40,338.45 L100.45,335.37 L101.54,332.30 L102.64,329.24 L103.78,326.18 L104.94,323.14 L106.12,320.11 L107.33,317.09 L108.57,314.07 L109.83,311.07 L111.11,308.08 L112.42,305.10 L113.76,302.13 L115.12,299.17 L116.50,296.22 L117.91,293.28 L119.35,290.36 L120.80,287.45 L122.29,284.55 L123.79,281.66 L125.32,278.79 L126.88,275.92 L128.45,273.08 L130.06,270.24 L131.68,267.42 L133.33,264.62 L135.00,261.82 L136.69,259.04 L138.41,256.28 L140.15,253.53 L141.91,250.80 L143.70,248.08 L145.50,245.37 L147.33,242.69 L149.18,240.01 L151.05,237.36 L152.95,234.72 L154.86,232.09 L156.80,229.49 L158.76,226.90 L160.74,224.32 L162.74,221.77 L164.76,219.23 L166.80,216.71 L168.87,214.20 L170.95,211.72 L173.05,209.25 L175.17,206.80 L177.32,204.37 L179.48,201.96 L181.66,199.56 L183.86,197.19 L186.08,194.84 L188.32,192.50 L190.58,190.18 L192.85,187.89 L195.15,185.61 L197.46,183.36 L199.79,181.12 L202.14,178.91 L204.51,176.71 L206.89,174.54 L209.29,172.38 L211.71,170.25 L214.15,168.14 L216.60,166.05 L219.07,163.99 L221.55,161.94 L224.06,159.92 L226.57,157.92 L229.11,155.94 L231.66,153.98 L234.22,152.05 L236.80,150.13 L239.40,148.24 L242.01,146.38 L244.63,144.54 L247.27,142.72 L249.93,140.92 L252.60,139.15 L255.28,137.40 L257.97,135.67 L260.68,133.97 L263.41,132.30 L266.14,130.64 L268.89,129.01 L271.66,127.41 L274.43,125.83 L277.22,124.27 L280.02,122.74 L282.83,121.24 L285.65,119.76 L288.49,118.30 L291.33,116.87 L294.19,115.47 L297.06,114.09 L299.94,112.74 L302.83,111.41 L305.72,110.11 L308.63,108.83 L311.55,107.58 L314.48,106.36 L317.42,105.16 L320.37,103.99 L323.33,102.84 L326.30,101.72 L329.27,100.63 L332.25,99.56 L335.25,98.52 L338.25,97.51 L341.25,96.53 L344.27,95.57 L347.29,94.64 L350.32,93.73 L353.36,92.85 L356.40,92.00 L359.45,91.18 L362.51,90.38 L365.57,89.62 L368.64,88.88 L371.71,88.16 L374.79,87.48 L377.88,86.82 L380.97,86.19 L384.06,85.58 L387.16,85.01 L390.27,84.46 L393.38,83.94 L396.49,83.45 L399.60,82.99 L402.72,82.55 L405.84,82.14 L408.97,81.76 L412.10,81.41 L415.23,81.09 L418.36,80.79 L421.50,80.52 L424.64,80.28 L427.77,80.07 L430.92,79.89 L434.06,79.73 L437.20,79.61 L440.34,79.51 L443.49,79.44 L446.63,79.39 L449.78,79.38"/>
<path d="M449.78,264.61 L451.37,264.62 L452.97,264.64 L454.56,264.67 L456.16,264.72 L457.75,264.79 L459.34,264.86 L460.93,264.96 L462.53,265.06 L464.12,265.18 L465.70,265.31 L467.29,265.46 L468.88,265.62 L470.46,265.80 L472.05,265.99 L473.63,266.19 L475.21,266.41 L476.79,266.64 L478.37,266.89 L479.94,267.15 L481.51,267.42 L483.08,267.71 L484.65,268.01 L486.22,268.33 L487.78,268.66 L489.34,269.00 L490.89,269.36 L492.45,269.73 L494.00,270.11 L495.55,270.51 L497.09,270.92 L498.63,271.35 L500.17,271.79 L501.70,272.24 L503.23,272.70 L504.76,273.18 L506.28,273.68 L507.79,274.18 L509.31,274.70 L510.82,275.24 L512.32,275.78 L513.82,276.34 L515.32,276.91 L516.81,277.50 L518.29,278.10 L519.77,278.71 L521.25,279.34 L522.72,279.97 L524.18,280.62 L525.64,281.29 L527.09,281.97 L528.54,282.66 L529.98,283.36 L531.42,284.07 L532.85,284.80 L534.27,285.54 L535.69,286.29 L537.10,287.06 L538.51,287.84 L539.91,288.63 L541.30,289.43 L542.69,290.24 L544.06,291.07 L545.44,291.91 L546.80,292.76 L548.16,293.62 L549.51,294.49 L550.85,295.38 L552.19,296.28 L553.51,297.19 L554.83,298.11 L556.15,299.04 L557.45,299.99 L558.75,300.94 L560.04,301.91 L561.32,302.89 L562.59,303.88 L563.85,304.88 L565.11,305.89 L566.36,306.91 L567.60,307.95 L568.83,308.99 L570.05,310.05 L571.26,311.11 L572.46,312.19 L573.66,313.28 L574.84,314.37 L576.02,315.48 L577.18,316.60 L578.34,317.73 L579.49,318.87 L580.63,320.01 L581.75,321.17 L582.87,322.34 L583.98,323.52 L585.08,324.70 L586.17,325.90 L587.25,327.11 L588.32,328.32 L589.37,329.55 L590.42,330.78 L591.46,332.02 L592.49,333.27 L593.50,334.54 L594.51,335.80 L595.50,337.08 L596.49,338.37 L597.46,339.67 L598.42,340.97 L599.37,342.28 L600.31,343.60 L601.24,344.93 L602.16,346.27 L603.07,347.61 L603.96,348.96 L604.84,350.32 L605.71,351.69 L606.57,353.06 L607.42,354.44 L608.26,355.83 L609.08,357.23 L609.90,358.63 L610.70,360.04 L611.49,361.46 L612.26,362.89 L613.03,364.32 L613.78,365.75 L614.52,367.20 L615.25,368.65 L615.97,370.10 L616.67,371.56 L617.36,373.03 L618.04,374.51 L618.70,375.99 L619.36,377.47 L620.00,378.96 L620.62,380.46 L621.24,381.96 L621.84,383.47 L622.43,384.98 L623.00,386.49 L623.57,388.02 L624.12,389.54 L624.65,391.07 L625.18,392.61 L625.69,394.15 L626.18,395.69 L626.67,397.24 L627.14,398.79 L627.60,400.35 L628.04,401.91 L628.47,403.47 L628.89,405.04 L629.29,406.61 L629.68,408.18 L630.06,409.76 L630.42,411.34 L630.77,412.92 L631.10,414.50 L631.42,416.09 L631.73,417.68 L632.03,419.28 L632.31,420.87 L632.57,422.47 L632.83,424.07 L633.06,425.67 L633.29,427.27 L633.50,428.88 L633.70,430.49 L633.88,432.10 L634.05,433.71 L634.21,435.32 L634.35,436.93 L634.47,438.54 L634.59,440.16 L634.69,441.77 L634.77,443.39 L634.84,445.00 L634.90,446.62 L634.94,448.23 L634.97,449.85 L634.98,451.47 L634.99,453.08 L634.97,454.70 L634.94,456.31 L634.90,457.93 L634.85,459.54 L634.78,461.16 L634.69,462.77 L634.59,464.38 L634.48,465.99 L634.35,467.60 L634.21,469.21 L634.06,470.82 L633.89,472.43 L633.71,474.03 L633.51,475.63 L633.30,477.23 L633.07,478.83 L632.83,480.42 L632.58,482.02 L632.31,483.61 L632.03,485.20 L631.74,486.78 L631.43,488.36 L631.10,489.94 L630.77,491.52 L630.42,493.09 L630.05,494.66 L629.67,496.23 L629.28,497.79 L628.87,499.35 L628.45,500.91 L628.02,502.46 L627.57,504.01 L627.11,505.55 L626.64,507.09 L626.15,508.63 L625.64,510.16 L625.13,511.68 L624.60,513.21 L624.06,514.72 L623.50,516.23 L622.93,517.74 L622.35,519.24 L621.75,520.74 L621.14,522.23 L620.52,523.71 L619.88,525.19 L619.23,526.67 L618.57,528.14 L617.89,529.60 L617.21,531.05 L616.50,532.50 L615.79,533.95 L615.06,535.38 L614.32,536.81 L613.57,538.24 L612.80,539.66 L612.02,541.07 L611.23,542.47 L610.43,543.87 L609.61,545.26 L608.79,546.64 L607.95,548.01 L607.09,549.38 L606.23,550.74 L605.35,552.09 L604.46,553.43 L603.56,554.77 L602.64,556.10 L601.72,557.42 L600.78,558.73 L599.83,560.03 L598.87,561.33 L597.90,562.62 L596.92,563.90 L595.92,565.16 L594.91,566.43 L593.90,567.68 L592.87,568.92 L591.83,570.15 L590.77,571.38 L589.71,572.59 L588.64,573.80 L587.55,575.00 L586.46,576.18 L585.35,577.36 L584.23,578.53 L583.11,579.69 L581.97,580.83 L580.82,581.97 L579.66,583.10 L578.50,584.22 L577.32,585.33 L576.13,586.42 L574.93,587.51 L573.72,588.59 L572.50,589.65 L571.28,590.71 L570.04,591.75 L568.79,592.79 L567.54,593.81 L566.27,594.82 L565.00,595.82 L563.72,596.81 L562.42,597.79 L561.12,598.76 L559.81,599.71 L558.49,600.66 L557.17,601.59 L555.83,602.51 L554.49,603.42 L553.14,604.32 L551.78,605.21 L550.41,606.08 L549.03,606.94 L547.65,607.79 L546.26,608.63 L544.86,609.46 L543.45,610.27 L542.04,611.07 L540.61,611.86 L539.19,612.64 L537.75,613.41 L536.31,614.16 L534.86,614.90 L533.40,615.63 L531.94,616.34 L530.47,617.04 L529.00,617.73 L527.51,618.41 L526.03,619.08 L524.53,619.73 L523.03,620.36 L521.53,620.99 L520.02,621.60 L518.50,622.20 L516.98,622.79 L515.45,623.36 L513.92,623.92 L512.38,624.46 L510.84,625.00 L509.29,625.52 L507.74,626.02 L506.18,626.52 L504.62,627.00 L503.05,627.46 L501.48,627.91 L499.91,628.35 L498.33,628.78 L496.75,629.19 L495.16,629.59 L493.58,629.97 L491.98,630.34 L490.39,630.70 L488.79,631.04 L487.19,631.37 L485.58,631.69 L483.97,631.99 L482.36,632.28 L480.75,632.55 L479.13,632.81 L477.52,633.06 L475.90,633.29 L474.27,633.51 L472.65,633.71 L471.02,633.90 L469.40,634.08 L467.77,634.24 L466.14,634.39 L464.50,634.52 L462.87,634.64 L461.24,634.74 L459.60,634.84 L457.97,634.91 L456.33,634.98 L454.69,635.03 L453.06,635.06 L451.42,635.08 L449.78,635.09 L448.14,635.08 L446.50,635.06 L444.87,635.03 L443.23,634.98 L441.59,634.91 L439.96,634.84 L438.32,634.74 L436.69,634.64 L435.06,634.52 L433.42,634.39 L431.79,634.24 L430.16,634.08 L428.54,633.90 L426.91,633.71 L425.29,633.51 L423.66,633.29 L422.04,633.06 L420.43,632.81 L418.81,632.55 L417.20,632.28 L415.59,631.99 L413.98,631.69 L412.37,631.37 L410.77,631.04 L409.17,630.70 L407.58,630.34 L405.98,629.97 L404.40,629.59 L402.81,629.19 L401.23,628.78 L399.65,628.35 L398.08,627.91 L396.51,627.46 L394.94,627.00 L393.38,626.52 L391.82,626.02 L390.27,625.52 L388.72,625.00 L387.18,624.46 L385.64,623.92 L384.11,623.36 L382.58,622.79 L381.06,622.20 L379.54,621.60 L378.03,620.99 L376.53,620.36 L375.03,619.73 L373.53,619.08 L372.05,618.41 L370.56,617.73 L369.09,617.04 L367.62,616.34 L366.16,615.63 L364.70,614.90 L363.25,614.16 L361.81,613.41 L360.37,612.64 L358.95,611.86 L357.52,611.07 L356.11,610.27 L354.70,609.46 L353.30,608.63 L351.91,607.79 L350.53,606.94 L349.15,606.08 L347.78,605.21 L346.42,604.32 L345.07,603.42 L343.73,602.51 L342.39,601.59 L341.07,600.66 L339.75,599.71 L338.44,598.76 L337.14,597.79 L335.84,596.81 L334.56,595.82 L333.29,594.82 L332.02,593.81 L330.77,592.79 L329.52,591.75 L328.28,590.71 L327.06,589.65 L325.84,588.59 L324.63,587.51 L323.43,586.42 L322.24,585.33 L321.06,584.22 L319.90,583.10 L318.74,581.97 L317.59,580.83 L316.45,579.69 L315.33,578.53 L314.21,577.36 L313.10,576.18 L312.01,575.00 L310.92,573.80 L309.85,572.59 L308.79,571.38 L307.73,570.15 L306.69,568.92 L305.66,567.68 L304.65,566.43 L303.64,565.16 L302.64,563.90 L301.66,562.62 L300.69,561.33 L299.73,560.03 L298.78,558.73 L297.84,557.42 L296.92,556.10 L296.00,554.77 L295.10,553.43 L294.21,552.09 L293.33,550.74 L292.47,549.38 L291.61,548.01 L290.77,546.64 L289.95,545.26 L289.13,543.87 L288.33,542.47 L287.54,541.07 L286.76,539.66 L285.99,538.24 L285.24,536.81 L284.50,535.38 L283.77,533.95 L283.06,532.50 L282.35,531.05 L281.67,529.60 L280.99,528.14 L280.33,526.67 L279.68,525.19 L279.04,523.71 L278.42,522.23 L277.81,520.74 L277.21,519.24 L276.63,517.74 L276.06,516.23 L275.50,514.72 L274.96,513.21 L274.43,511.68 L273.92,510.16 L273.41,508.63 L272.92,507.09 L272.45,505.55 L271.99,504.01 L271.54,502.46 L271.11,500.91 L270.69,499.35 L270.28,497.79 L269.89,496.23 L269.51,494.66 L269.14,493.09 L268.79,491.52 L268.46,489.94 L268.13,488.36 L267.82,486.78 L267.53,485.20 L267.25,483.61 L266.98,482.02 L266.73,480.42 L266.49,478.83 L266.26,477.23 L266.05,475.63 L265.85,474.03 L265.67,472.43 L265.50,470.82 L265.35,469.21 L265.21,467.60 L265.08,465.99 L264.97,464.38 L264.87,462.77 L264.78,461.16 L264.71,459.54 L264.66,457.93 L264.62,456.31 L264.59,454.70 L264.57,453.08 L264.58,451.47 L264.59,449.85 L264.62,448.23 L264.66,446.62 L264.72,445.00 L264.79,443.39 L264.87,441.77 L264.97,440.16 L265.09,438.54 L265.21,436.93 L265.35,435.32 L265.51,433.71 L265.68,432.10 L265.86,430.49 L266.06,428.88 L266.27,427.27 L266.50,425.67 L266.73,424.07 L266.99,422.47 L267.25,420.87 L267.53,419.28 L267.83,417.68 L268.14,416.09 L268.46,414.50 L268.79,412.92 L269.14,411.34 L269.50,409.76 L269.88,408.18 L270.27,406.61 L270.67,405.04 L271.09,403.47 L271.52,401.91 L271.96,400.35 L272.42,398.79 L272.89,397.24 L273.38,395.69 L273.87,394.15 L274.38,392.61 L274.91,391.07 L275.44,389.54 L275.99,388.02 L276.56,386.49 L277.13,384.98 L277.72,383.47 L278.32,381.96 L278.94,380.46 L279.56,378.96 L280.20,377.47 L280.86,375.99 L281.52,374.51 L282.20,373.03 L282.89,371.56 L283.59,370.10 L284.31,368.65 L285.04,367.20 L285.78,365.75 L286.53,364.32 L287.30,362.89 L288.07,361.46 L288.86,360.04 L289.66,358.63 L290.48,357.23 L291.30,355.83 L292.14,354.44 L292.99,353.06 L293.85,351.69 L294.72,350.32 L295.60,348.96 L296.49,347.61 L297.40,346.27 L298.32,344.93 L299.25,343.60 L300.19,342.28 L301.14,340.97 L302.10,339.67 L303.07,338.37 L304.06,337.08 L305.05,335.80 L306.06,334.54 L307.07,333.27 L308.10,332.02 L309.14,330.78 L310.19,329.55 L311.24,328.32 L312.31,327.11 L313.39,325.90 L314.48,324.70 L315.58,323.52 L316.69,322.34 L317.81,321.17 L318.93,320.01 L320.07,318.87 L321.22,317.73 L322.38,316.60 L323.54,315.48 L324.72,314.37 L325.90,313.28 L327.10,312.19 L328.30,311.11 L329.51,310.05 L330.73,308.99 L331.96,307.95 L333.20,306.91 L334.45,305.89 L335.71,304.88 L336.97,303.88 L338.24,302.89 L339.52,301.91 L340.81,300.94 L342.11,299.99 L343.41,299.04 L344.73,298.11 L346.05,297.19 L347.37,296.28 L348.71,295.38 L350.05,294.49 L351.40,293.62 L352.76,292.76 L354.12,291.91 L355.50,291.07 L356.87,290.24 L358.26,289.43 L359.65,288.63 L361.05,287.84 L362.46,287.06 L363.87,286.29 L365.29,285.54 L366.71,284.80 L368.14,284.07 L369.58,283.36 L371.02,282.66 L372.47,281.97 L373.92,281.29 L375.38,280.62 L376.84,279.97 L378.31,279.34 L379.79,278.71 L381.27,278.10 L382.75,277.50 L384.24,276.91 L385.74,276.34 L387.24,275.78 L388.74,275.24 L390.25,274.70 L391.77,274.18 L393.28,273.68 L394.80,273.18 L396.33,272.70 L397.86,272.24 L399.39,271.79 L400.93,271.35 L402.47,270.92 L404.01,270.51 L405.56,270.11 L407.11,269.73 L408.67,269.36 L410.22,269.00 L411.78,268.66 L413.34,268.33 L414.91,268.01 L416.48,267.71 L418.05,267.42 L419.62,267.15 L421.19,266.89 L422.77,266.64 L424.35,266.41 L425.93,266.19 L427.51,265.99 L429.10,265.80 L430.68,265.62 L432.27,265.46 L433.86,265.31 L435.44,265.18 L437.03,265.06 L438.63,264.96 L440.22,264.86 L441.81,264.79 L443.40,264.72 L445.00,264.67 L446.59,264.64 L448.19,264.62 L449.78,264.61"/>
</g>
<rect x="426" y="74" width="47" height="11" fill="#000"/>
<rect x="429" y="259" width="41" height="11" fill="#000"/>
<path fill="#ffff00" d="M431,75h2v1h-2zM429,76h4v1h-4zM430,77h2v1h-2zM430,78h2v1h-2zM430,79h2v1h-2zM429,80h2v1h-2zM429,81h2v1h-2zM429,82h2v1h-2zM436,75h3v1h-3zM435,76h2v1h-2zM438,76h2v1h-2zM435,77h2v1h-2zM438,77h2v1h-2zM434,78h2v1h-2zM438,78h2v1h-2zM434,79h2v1h-2zM438,79h2v1h-2zM434,80h2v1h-2zM437,80h2v1h-2zM434,81h2v1h-2zM437,81h2v1h-2zM435,82h3v1h-3zM442,75h3v1h-3zM441,76h2v1h-2zM444,76h2v1h-2zM441,77h2v1h-2zM444,77h2v1h-2zM440,78h2v1h-2zM444,78h2v1h-2zM440,79h2v1h-2zM444,79h2v1h-2zM440,80h2v1h-2zM443,80h2v1h-2zM440,81h2v1h-2zM443,81h2v1h-2zM441,82h3v1h-3zM451,75h2v1h-2zM456,75h2v1h-2zM451,76h2v1h-2zM456,76h2v1h-2zM450,77h3v1h-3zM455,77h2v1h-2zM450,78h4v1h-4zM455,78h2v1h-2zM450,79h2v1h-2zM453,79h4v1h-4zM449,80h2v1h-2zM453,80h3v1h-3zM449,81h2v1h-2zM454,81h2v1h-2zM449,82h2v1h-2zM454,82h2v1h-2zM459,75h2v1h-2zM466,75h2v1h-2zM459,76h2v1h-2zM465,76h3v1h-3zM458,77h4v1h-4zM464,77h3v1h-3zM458,78h2v1h-2zM461,78h1v1h-1zM463,78h4v1h-4zM458,79h2v1h-2zM461,79h3v1h-3zM465,79h2v1h-2zM457,80h2v1h-2zM461,80h2v1h-2zM464,80h2v1h-2zM457,81h2v1h-2zM461,81h2v1h-2zM464,81h2v1h-2zM457,82h2v1h-2zM461,82h1v1h-1zM464,82h2v1h-2zM469,75h2v1h-2zM469,76h2v1h-2zM468,77h2v1h-2zM468,78h2v1h-2zM468,79h2v1h-2zM467,80h2v1h-2zM467,81h2v1h-2zM467,82h2v1h-2zM433,260h4v1h-4zM433,261h2v1h-2zM432,262h2v1h-2zM432,263h3v1h-3zM434,264h2v1h-2zM434,265h2v1h-2zM431,266h2v1h-2zM434,266h2v1h-2zM432,267h3v1h-3zM439,260h3v1h-3zM438,261h2v1h-2zM441,261h2v1h-2zM438,262h2v1h-2zM441,262h2v1h-2zM437,263h2v1h-2zM441,263h2v1h-2zM437,264h2v1h-2zM441,264h2v1h-2zM437,265h2v1h-2zM440,265h2v1h-2zM437,266h2v1h-2zM440,266h2v1h-2zM438,267h3v1h-3zM448,260h2v1h-2zM453,260h2v1h-2zM448,261h2v1h-2zM453,261h2v1h-2zM447,262h3v1h-3zM452,262h2v1h-2zM447,263h4v1h-4zM452,263h2v1h-2zM447,264h2v1h-2zM450,264h4v1h-4zM446,265h2v1h-2zM450,265h3v1h-3zM446,266h2v1h-2zM451,266h2v1h-2zM446,267h2v1h-2zM451,267h2v1h-2zM456,260h2v1h-2zM463,260h2v1h-2zM456,261h2v1h-2zM462,261h3v1h-3zM455,262h4v1h-4zM461,262h3v1h-3zM455,263h2v1h-2zM458,263h1v1h-1zM460,263h4v1h-4zM455,264h2v1h-2zM458,264h3v1h-3zM462,264h2v1h-2zM454,265h2v1h-2zM458,265h2v1h-2zM461,265h2v1h-2zM454,266h2v1h-2zM458,266h2v1h-2zM461,266h2v1h-2zM454,267h2v1h-2zM458,267h1v1h-1zM461,267h2v1h-2zM466,260h2v1h-2zM466,261h2v1h-2zM465,262h2v1h-2zM465,263h2v1h-2zM465,264h2v1h-2zM464,265h2v1h-2zM464,266h2v1h-2zM464,267h2v1h-2z"/>
<rect x="0" y="888" width="900" height="12" fill="#000"/>
<path fill="none" stroke="#ffffff" stroke-width="1" stroke-linecap="square" d="M208.50,889.50L208.50,896.50M208.50,889.50L212.50,889.50L214.50,891.50L214.50,894.50L212.50,896.50L208.50,896.50M218.50,889.50L222.50,889.50M220.50,889.50L220.50,896.50M218.50,896.50L222.50,896.50M232.50,891.50L230.50,889.50L228.50,889.50L226.50,891.50L226.50,894.50L228.50,896.50L230.50,896.50L232.50,894.50L232.50,893.50L229.50,893.50M236.50,889.50L240.50,889.50M238.50,889.50L238.50,896.50M236.50,896.50L240.50,896.50M244.50,889.50L250.50,889.50M247.50,889.50L247.50,896.50M253.50,896.50L253.50,891.50L255.50,889.50L257.50,889.50L259.50,891.50L259.50,896.50M253.50,893.50L259.50,893.50M262.50,889.50L262.50,896.50L268.50,896.50M286.50,890.50L285.50,889.50L281.50,889.50L280.50,890.50L280.50,892.00L281.50,893.00L285.50,893.00L286.50,894.00L286.50,895.50L285.50,896.50L281.50,896.50L280.50,895.50M289.50,889.50L295.50,889.50M292.50,889.50L292.50,896.50M300.50,889.50L302.50,889.50L304.50,891.50L304.50,894.50L302.50,896.50L300.50,896.50L298.50,894.50L298.50,891.50ZM307.50,896.50L307.50,889.50L312.50,889.50L313.50,890.50L313.50,892.50L312.50,893.50L307.50,893.50M310.50,893.50L313.50,896.50M316.50,896.50L316.50,889.50L319.50,893.00L322.50,889.50L322.50,896.50M334.50,889.50L340.50,889.50M337.50,889.50L337.50,896.50M345.50,889.50L347.50,889.50L349.50,891.50L349.50,894.50L347.50,896.50L345.50,896.50L343.50,894.50L343.50,891.50ZM352.50,889.50L358.50,889.50M355.50,889.50L355.50,896.50M361.50,896.50L361.50,891.50L363.50,889.50L365.50,889.50L367.50,891.50L367.50,896.50M361.50,893.50L367.50,893.50M370.50,889.50L370.50,896.50L376.50,896.50M388.50,896.50L388.50,891.50L390.50,889.50L392.50,889.50L394.50,891.50L394.50,896.50M388.50,893.50L394.50,893.50M403.50,891.50L401.50,889.50L399.50,889.50L397.50,891.50L397.50,894.50L399.50,896.50L401.50,896.50L403.50,894.50M412.50,891.50L410.50,889.50L408.50,889.50L406.50,891.50L406.50,894.50L408.50,896.50L410.50,896.50L412.50,894.50M415.50,889.50L415.50,895.50L416.50,896.50L420.50,896.50L421.50,895.50L421.50,889.50M424.50,896.50L424.50,889.50L427.50,893.00L430.50,889.50L430.50,896.50M433.50,889.50L433.50,895.50L434.50,896.50L438.50,896.50L439.50,895.50L439.50,889.50M442.50,889.50L442.50,896.50L448.50,896.50M451.50,896.50L451.50,891.50L453.50,889.50L455.50,889.50L457.50,891.50L457.50,896.50M451.50,893.50L457.50,893.50M460.50,889.50L466.50,889.50M463.50,889.50L463.50,896.50M470.50,889.50L474.50,889.50M472.50,889.50L472.50,896.50M470.50,896.50L474.50,896.50M480.50,889.50L482.50,889.50L484.50,891.50L484.50,894.50L482.50,896.50L480.50,896.50L478.50,894.50L478.50,891.50ZM487.50,896.50L487.50,889.50L493.50,896.50L493.50,889.50M506.50,892.50L510.50,892.50M523.50,889.50L523.50,896.50M529.50,889.50L523.50,894.50M525.90,892.50L529.50,896.50M532.50,896.50L532.50,891.50L534.50,889.50L536.50,889.50L538.50,891.50L538.50,896.50M532.50,893.50L538.50,893.50M547.50,889.50L541.50,889.50L541.50,896.50L547.50,896.50M541.50,893.00L545.50,893.00M556.50,891.50L554.50,889.50L552.50,889.50L550.50,891.50L550.50,894.50L552.50,896.50L554.50,896.50L556.50,894.50M570.00,890.50L571.50,889.50L571.50,896.50M569.50,896.50L573.50,896.50M578.50,889.50L582.50,889.50L583.50,890.50L583.50,892.00L582.50,893.00L578.50,893.00L577.50,892.00L577.50,890.50ZM578.50,893.00L577.50,894.00L577.50,895.50L578.50,896.50L582.50,896.50L583.50,895.50L583.50,894.00L582.50,893.00M597.50,889.50L599.50,889.50L601.50,891.50L601.50,894.50L599.50,896.50L597.50,896.50L595.50,894.50L595.50,891.50ZM610.50,891.50L608.50,889.50L606.50,889.50L604.50,891.50L604.50,894.50L606.50,896.50L608.50,896.50L610.50,894.50M613.50,889.50L619.50,889.50M616.50,889.50L616.50,896.50M631.50,890.50L632.50,889.50L636.50,889.50L637.50,890.50L637.50,891.90L632.10,895.90L631.50,896.50L637.50,896.50M646.50,889.50L640.50,889.50L640.50,892.50L645.50,892.50L646.50,893.50L646.50,895.50L645.50,896.50L641.50,896.50L640.50,895.50M660.00,890.50L661.50,889.50L661.50,896.50M659.50,896.50L663.50,896.50M667.50,889.50L673.50,889.50L673.50,890.50L667.50,896.50M679.50,892.50L679.51,892.50M679.50,894.50L679.51,894.50M690.50,896.50L690.50,889.50L685.50,894.50L691.50,894.50M694.50,895.50L695.50,896.50L699.50,896.50L700.50,895.50L700.50,890.50L699.50,889.50L695.50,889.50L694.50,890.50L694.50,892.00L695.50,893.00L700.50,893.00"/>
</svg></body></html>
